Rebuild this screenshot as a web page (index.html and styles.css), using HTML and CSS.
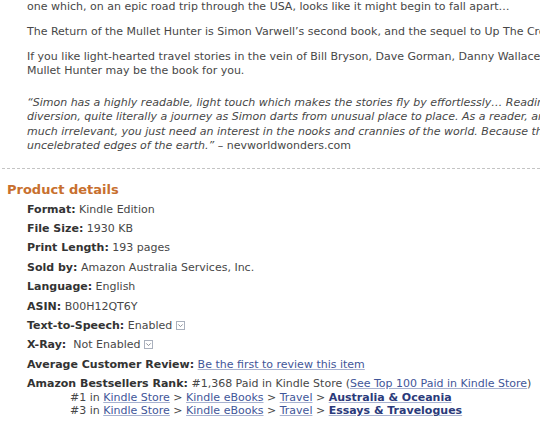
FILE: index.html
```html
<!DOCTYPE html>
<html>
<head>
<meta charset="utf-8">
<link rel="stylesheet" href="styles.css">
</head>
<body>
<div class="page">
  <div class="desc">
    <p>one which, on an epic road trip through the USA, looks like it might begin to fall apart…</p>
    <p>The Return of the Mullet Hunter is Simon Varwell’s second book, and the sequel to Up The Creek</p>
    <p>If you like light-hearted travel stories in the vein of Bill Bryson, Dave Gorman, Danny Wallace<br>Mullet Hunter may be the book for you.</p>
    <p class="quote"><em>“Simon has a highly readable, light touch which makes the stories fly by effortlessly… Reading<br>diversion, quite literally a journey as Simon darts from unusual place to place. As a reader, and<br>much irrelevant, you just need an interest in the nooks and crannies of the world. Because that<br>uncelebrated edges of the earth.”</em> – nevworldwonders.com</p>
  </div>
  <hr class="divider">
  <h2 class="title">Product details</h2>
  <ul class="details">
    <li><b>Format:</b> Kindle Edition</li>
    <li><b>File Size:</b> 1930 KB</li>
    <li><b>Print Length:</b> 193 pages</li>
    <li><b>Sold by:</b> Amazon Australia Services, Inc.</li>
    <li><b>Language:</b> English</li>
    <li><b>ASIN:</b> B00H12QT6Y</li>
    <li><b>Text-to-Speech:</b> Enabled <span class="dd"><svg width="9" height="9" viewBox="0 0 9 9"><rect x="0.5" y="0.5" width="8" height="8" fill="#fff" stroke="#a9b0bd"/><path d="M2.3 3.4 L4.5 5.6 L6.7 3.4" fill="none" stroke="#8a8f99" stroke-width="1"/></svg></span></li>
    <li><b>X-Ray:</b>&nbsp; Not Enabled <span class="dd"><svg width="9" height="9" viewBox="0 0 9 9"><rect x="0.5" y="0.5" width="8" height="8" fill="#fff" stroke="#a9b0bd"/><path d="M2.3 3.4 L4.5 5.6 L6.7 3.4" fill="none" stroke="#8a8f99" stroke-width="1"/></svg></span></li>
    <li><b>Average Customer Review:</b> <a href="#">Be the first to review this item</a></li>
    <li class="rank"><b>Amazon Bestsellers Rank:</b> #1,368 Paid in Kindle Store (<a href="#">See Top 100 Paid in Kindle Store</a>)
      <ul class="sub">
        <li>#1 in <a href="#">Kindle Store</a> &gt; <a href="#">Kindle eBooks</a> &gt; <a href="#">Travel</a> &gt; <a class="strong" href="#">Australia &amp; Oceania</a></li>
        <li>#3 in <a href="#">Kindle Store</a> &gt; <a href="#">Kindle eBooks</a> &gt; <a href="#">Travel</a> &gt; <a class="strong" href="#">Essays &amp; Travelogues</a></li>
      </ul>
    </li>
  </ul>
</div>
</body>
</html>
```

FILE: styles.css
```css
html, body {
  margin: 0;
  padding: 0;
  background: #fff;
  overflow: hidden;
}
body {
  width: 540px;
  height: 423px;
  font-family: "DejaVu Sans", Verdana, sans-serif;
  font-size: 11px;
  color: #474747;
}
.page {
  width: 540px;
  overflow: hidden;
}
.desc {
  padding-left: 27px;
  white-space: nowrap;
}
.desc p {
  margin: 0 0 11px 0;
  line-height: 14px;
}
.desc p.quote {
  margin-top: 18px;
  line-height: 14.4px;
}
.desc em {
  font-style: italic;
}
.divider {
  border: 0;
  border-top: 1px dashed #c4c4c4;
  margin: 14px 0 0 2px;
  height: 0;
}
.title {
  margin: 13px 0 0 7px;
  font-size: 13px;
  line-height: 16px;
  font-weight: bold;
  color: #c8702e;
}
.details {
  list-style: none;
  margin: 2px 0 0 0;
  padding: 0 0 0 27px;
  white-space: nowrap;
}
.details > li {
  line-height: 19.4px;
}
.details b {
  color: #333;
}
.details a {
  color: #3f5699;
  text-decoration: underline;
  text-decoration-color: #a7b1cf;
}
.details a.strong {
  color: #2b3a7a;
  font-weight: bold;
}
.dd svg {
  vertical-align: -1px;
}
.sub {
  list-style: none;
  margin: -3px 0 0 0;
  padding: 0 0 0 43px;
}
.sub li {
  line-height: 13.6px;
}
```
